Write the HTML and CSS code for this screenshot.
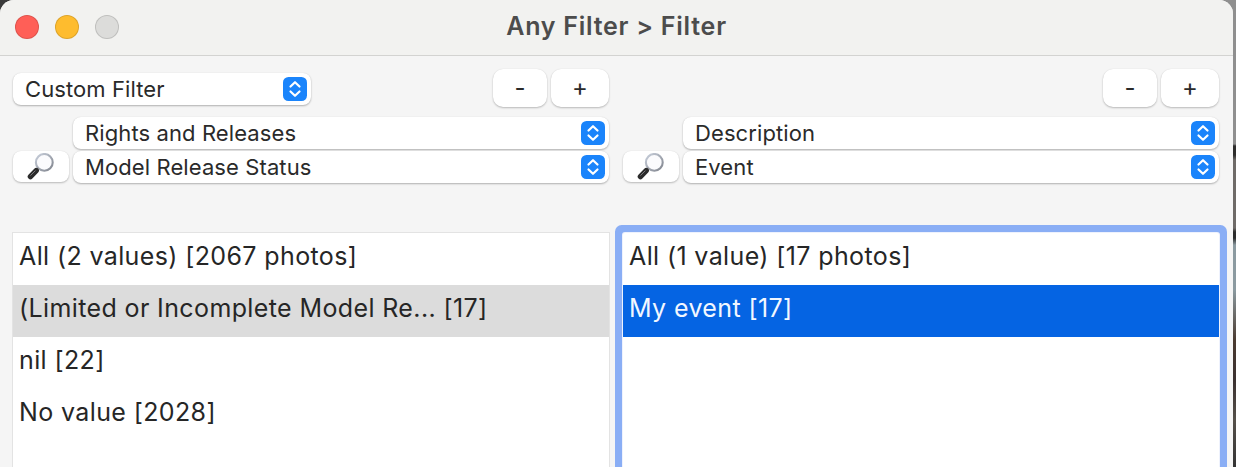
FILE: index.html
```html
<!DOCTYPE html>
<html lang="en">
<head>
<meta charset="utf-8">
<title>Any Filter &gt; Filter</title>
<link rel="stylesheet" href="styles.css">
</head>
<body>
<svg class="defs" width="0" height="0" aria-hidden="true">
  <defs>
    <linearGradient id="steel" x1="0" y1="0" x2="1" y2="1"><stop offset="0" stop-color="#c9d0dc"/><stop offset="1" stop-color="#80848d"/></linearGradient>
    <symbol id="loupe" viewBox="0 0 28 28">
      <circle cx="17.3" cy="9.4" r="8.4" fill="#fbfbfd" stroke="url(#steel)" stroke-width="2.1"/>
      <path d="M11.3 15.4 9.3 17.4" stroke="#777" stroke-width="2.6"/>
      <path d="M9.2 17.6 3.4 23.6" stroke="#2b2b2b" stroke-width="5.4" stroke-linecap="round"/>
      <path d="M8.4 17.6 3.4 22.6" stroke="#7b7b7e" stroke-width="1"/>
    </symbol>
    <symbol id="updown" viewBox="0 0 24 24">
      <rect width="24" height="24" rx="5.5" fill="#1a84fb"/>
      <path d="M7.5 9.5 12 5.2l4.5 4.3M7.5 14.5l4.5 4.3 4.5-4.3" fill="none" stroke="#fff" stroke-width="2.2" stroke-linecap="round" stroke-linejoin="round"/>
    </symbol>
  </defs>
</svg>
<div class="desktop">
  <main class="window">
    <header class="titlebar">
      <div class="lights"><span class="light red"></span><span class="light amber"></span><span class="light grey"></span></div>
      <h1 class="title">Any Filter &gt; Filter</h1>
    </header>
    <div class="content">
      <section class="pane">
        <div class="toprow">
          <div class="select preset"><span class="label">Custom Filter</span><svg class="chev"><use href="#updown"/></svg></div>
          <div class="stepper"><button class="step minus">-</button><button class="step plus">+</button></div>
        </div>
        <div class="fields">
          <button class="search"><svg class="loupe"><use href="#loupe"/></svg></button>
          <div class="selects">
            <div class="select"><span class="label">Rights and Releases</span><svg class="chev"><use href="#updown"/></svg></div>
            <div class="select"><span class="label">Model Release Status</span><svg class="chev"><use href="#updown"/></svg></div>
          </div>
        </div>
        <ul class="list">
          <li class="item">All (2 values) [2067 photos]</li>
          <li class="item inactive">(Limited or Incomplete Model Re... [17]</li>
          <li class="item">nil [22]</li>
          <li class="item">No value [2028]</li>
        </ul>
      </section>
      <section class="pane">
        <div class="toprow end">
          <div class="stepper"><button class="step minus">-</button><button class="step plus">+</button></div>
        </div>
        <div class="fields">
          <button class="search"><svg class="loupe"><use href="#loupe"/></svg></button>
          <div class="selects">
            <div class="select"><span class="label">Description</span><svg class="chev"><use href="#updown"/></svg></div>
            <div class="select"><span class="label">Event</span><svg class="chev"><use href="#updown"/></svg></div>
          </div>
        </div>
        <ul class="list focused">
          <li class="item">All (1 value) [17 photos]</li>
          <li class="item active">My event [17]</li>
        </ul>
      </section>
    </div>
  </main>
  <div class="backdrop"></div>
</div>
</body>
</html>
```

FILE: styles.css
```css
* { box-sizing: border-box; }
html, body { margin: 0; height: 467px; overflow: hidden; }
body { font-family: Inter, "Noto Sans", sans-serif; color: #262626; background: #3a3a3a; }
.defs { position: absolute; }
.desktop { display: flex; height: 467px; background: linear-gradient(90deg, #3a3a3a 0 20px, #8f8f8f 1200px); }
.window { width: 1233px; height: 467px; border-radius: 14px 14px 0 0; background: #f5f5f5; overflow: hidden; flex: none; }
.backdrop { flex: 1; background: linear-gradient(180deg, #8f8f8f 0 144px, #2e2d2c 146px 155px, #6f6b68 160px 228px, #2c2c2c 232px 238px, #8b9aa0 245px 290px, #4a3a30 340px, #3a3030 380px, #55504a 420px, #333 467px); }
.titlebar { position: relative; display: flex; justify-content: center; align-items: center; height: 56px; padding-bottom: 3px; background: #f2f2f0; border-bottom: 1px solid #d3d3d1; }
.lights { position: absolute; left: 15px; top: 15px; display: flex; gap: 16px; }
.light { width: 24px; height: 24px; border-radius: 50%; border: 1px solid rgba(0,0,0,.13); }
.red { background: #ff5f57; }
.amber { background: #febc2e; }
.grey { background: #dcdcda; }
.title { margin: 0; font-size: 25px; line-height: 28px; font-weight: 600; letter-spacing: .75px; color: #4c4c4c; }
.content { display: flex; gap: 14px; padding: 13px 14px 0 13px; }
.pane { width: 596px; flex: none; }
.toprow { display: flex; justify-content: space-between; align-items: center; height: 38px; }
.end { justify-content: flex-end; }
.select { display: flex; align-items: center; justify-content: space-between; height: 32px; padding: 0 4px 0 12px; background: #fff; border-radius: 8px; box-shadow: 0 1px 2px rgba(0,0,0,.28), 0 0 1px rgba(0,0,0,.1); }
.preset { width: 298px; position: relative; top: 1px; }
.label { font-size: 22px; letter-spacing: .1px; line-height: 32px; color: #2a2a2a; }
.chev { width: 24px; height: 24px; }
.stepper { display: flex; gap: 4px; }
.step { height: 38px; padding: 0; border: 0; background: #fff; border-radius: 10px; box-shadow: 0 1px 2px rgba(0,0,0,.24), 0 0 1px rgba(0,0,0,.1); font: 400 24px/36px Inter, sans-serif; color: #2a2a2a; }
.minus { width: 54px; }
.plus { width: 58px; }
.fields { display: flex; align-items: flex-end; gap: 4px; margin-top: 10px; }
.search { display: flex; align-items: center; justify-content: center; width: 56px; height: 31px; padding: 0; border: 0; background: #fff; border-radius: 8px; margin-bottom: 1px; box-shadow: 0 1px 2px rgba(0,0,0,.24), 0 0 1px rgba(0,0,0,.1); }
.loupe { width: 28px; height: 28px; }
.selects { flex: 1; display: flex; flex-direction: column; gap: 2px; }
.list { list-style: none; margin: 50px 0 0; padding: 0; height: 240px; background: #fff; box-shadow: 0 0 0 1px #e3e3e3; }
.focused { box-shadow: 0 0 0 1px #eef2fd, 0 0 0 8px #8aaef5; border-radius: 2px; }
.item { height: 52px; padding-left: 6px; font-size: 25px; line-height: 46px; letter-spacing: .38px; white-space: nowrap; color: #262626; }
.inactive { background: #dcdcdc; }
.active { background: #0564e3; color: #f2f7ff; }
```
